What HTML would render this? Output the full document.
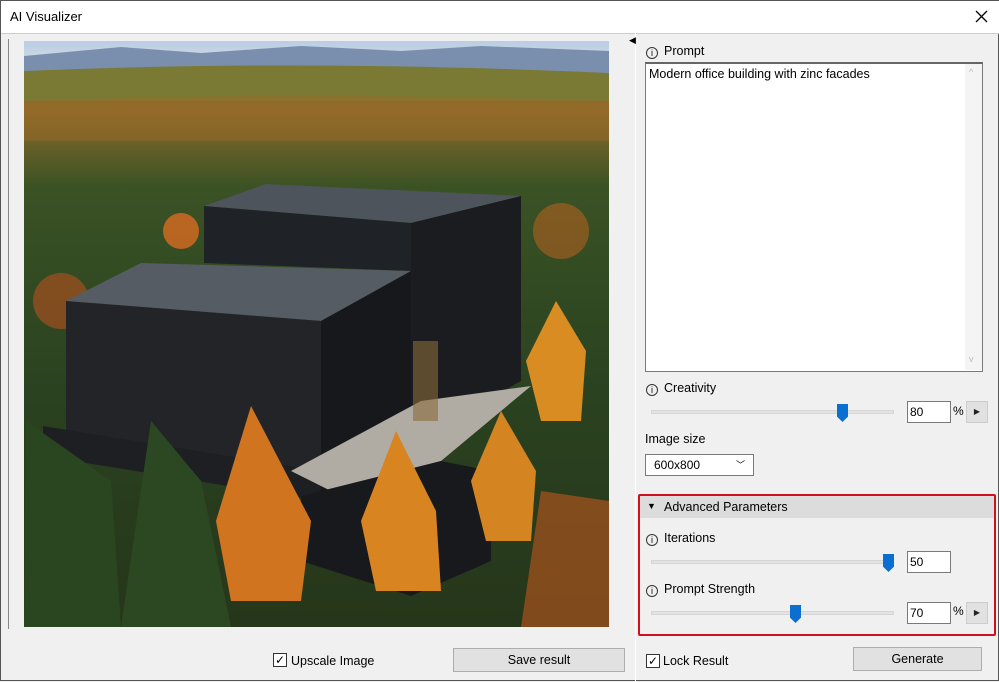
<!DOCTYPE html>
<html><head><style>
*{box-sizing:border-box;margin:0;padding:0}
body{width:999px;height:681px;background:#f0f0f0;font-family:"Liberation Sans",sans-serif;font-size:12px;color:#000;position:relative;overflow:hidden;border:1px solid #555}
.a{position:absolute}
.title{left:0;top:0;width:999px;height:32px;background:#fff}
.info{display:inline-block;width:12px;height:12px;border:1px solid #333;border-radius:50%;font-size:9px;text-align:center;line-height:10px;margin-right:6px;vertical-align:-1px}
.lbl{font-size:12.5px}
.track{height:4px;background:#e2e2e2;border:1px solid #d6d6d6}
.thumb{width:11px;height:18px;background:#0a6fd1;clip-path:polygon(0 0,100% 0,100% 70%,50% 100%,0 70%)}
.inp{background:#fff;border:1px solid #7a7a7a;height:22px;padding:3px 2px;font-size:12px}
.btn{background:#e1e1e1;border:1px solid #adadad;text-align:center;line-height:22px;font-size:12.5px}
.sbtn{width:22px;height:22px;background:#e1e1e1;border:1px solid #ccc;font-size:8px;text-align:center;line-height:20px;color:#222}
.cb{width:14px;height:14px;border:1px solid #333;background:#fff;font-size:12px;line-height:12px;text-align:center}
</style></head><body>
<div class="a title"></div>
<div class="a" style="left:9px;top:8px;font-size:13px">AI Visualizer</div>
<svg class="a" style="left:974px;top:9px" width="13" height="13"><path d="M1 1L12 12M12 1L1 12" stroke="#000" stroke-width="1.3"/></svg>
<div class="a" style="left:0;top:32px;width:999px;height:1px;background:#ccc"></div>
<div class="a" style="left:7px;top:38px;width:620px;height:590px;border-left:1px solid #888;background:#f0f0f0"></div>
<div class="a" style="left:634px;top:32px;width:1px;height:649px;background:#fff"></div>
<div class="a" style="left:628px;top:34px;font-size:9px">◀</div>
<svg class="a" style="left:23px;top:40px" width="585" height="586" viewBox="23 40 585 586">
<defs>
<linearGradient id="sky" x1="0" y1="0" x2="0" y2="1"><stop offset="0" stop-color="#b9cde4"/><stop offset="1" stop-color="#d6dde4"/></linearGradient>
<linearGradient id="for" x1="0" y1="0" x2="0" y2="1"><stop offset="0" stop-color="#6a7432"/><stop offset=".12" stop-color="#8a6a2a"/><stop offset=".25" stop-color="#3a5224"/><stop offset=".6" stop-color="#2a4220"/><stop offset="1" stop-color="#26361a"/></linearGradient>
</defs>
<rect x="23" y="40" width="585" height="586" fill="url(#for)"/>
<rect x="23" y="40" width="585" height="25" fill="url(#sky)"/>
<path d="M23 55 L120 46 L200 52 L300 45 L400 50 L480 45 L608 50 L608 72 L23 72Z" fill="#7a8fae"/>
<path d="M23 70 Q300 58 608 72 L608 100 L23 100Z" fill="#7a7a34"/>
<path d="M23 100 Q300 90 608 100 L608 140 L23 140Z" fill="#a06a28" opacity=".45"/>
<circle cx="60" cy="300" r="28" fill="#b8501e" opacity=".6"/>
<circle cx="180" cy="230" r="18" fill="#d06a22" opacity=".85"/>
<circle cx="560" cy="230" r="28" fill="#b06020" opacity=".6"/>
<path d="M203 205 L265 183 L520 195 L410 222Z" fill="#4e545c"/>
<path d="M203 205 L410 222 L410 270 L203 262Z" fill="#1f2226"/>
<path d="M410 222 L520 195 L520 380 L410 440Z" fill="#1a1c20"/>
<path d="M65 300 L140 262 L410 270 L320 320Z" fill="#565c64"/>
<path d="M65 300 L320 320 L320 470 L65 430Z" fill="#222428"/>
<path d="M320 320 L410 270 L410 450 L320 500Z" fill="#17181b"/>
<path d="M42 425 L320 470 L320 500 L42 455Z" fill="#1d1f23"/>
<path d="M290 470 L420 400 L530 385 L440 460 L330 490Z" fill="#b0aca4"/>
<path d="M300 495 L440 460 L490 470 L490 560 L410 595 L300 560Z" fill="#18191c"/>
<rect x="412" y="340" width="25" height="80" fill="#8a6a3a" opacity=".6"/>
<path d="M250 405 L215 520 L230 600 L300 600 L310 520Z" fill="#d07420"/>
<path d="M395 430 L360 520 L375 590 L440 590 L435 510Z" fill="#d88420"/>
<path d="M500 410 L470 480 L485 540 L530 540 L535 470Z" fill="#d48420"/>
<path d="M555 300 L525 360 L540 420 L580 420 L585 350Z" fill="#d88c22"/>
<path d="M25 420 L23 626 L120 626 L110 480Z" fill="#2a4620"/>
<path d="M150 420 L120 626 L230 626 L200 480Z" fill="#2c4822"/>
<path d="M540 490 L520 626 L608 626 L608 500Z" fill="#a0521e" opacity=".75"/>
</svg>
<div class="a cb" style="left:272px;top:652px">✓</div>
<div class="a lbl" style="left:290px;top:653px">Upscale Image</div>
<div class="a btn" style="left:452px;top:647px;width:172px;height:24px">Save result</div>
<div class="a lbl" style="left:645px;top:43px"><span class="info">i</span>Prompt</div>
<div class="a" style="left:644px;top:61px;width:338px;height:310px;background:#fff;border:1px solid #7a7a7a;border-top:2px solid #666"></div>
<div class="a" style="left:964px;top:63px;width:17px;height:306px;background:#f4f4f4"></div>
<div class="a" style="left:968px;top:66px;font-size:9px;color:#bbb">^</div>
<div class="a" style="left:968px;top:353px;font-size:9px;color:#bbb">v</div>
<div class="a" style="left:648px;top:66px;font-size:12.5px">Modern office building with zinc facades</div>
<div class="a lbl" style="left:645px;top:380px"><span class="info">i</span>Creativity</div>
<div class="a track" style="left:650px;top:409px;width:243px"></div>
<div class="a thumb" style="left:836px;top:403px"></div>
<div class="a inp" style="left:906px;top:400px;width:44px">80</div>
<div class="a" style="left:952px;top:403px;font-size:12px">%</div>
<div class="a sbtn" style="left:965px;top:400px">▶</div>
<div class="a lbl" style="left:644px;top:431px">Image size</div>
<div class="a inp" style="left:644px;top:453px;width:109px;height:22px;padding-left:8px">600x800<span style="position:absolute;right:8px;top:3px;font-size:9px">﹀</span></div>
<div class="a" style="left:637px;top:493px;width:358px;height:142px;border:2px solid #d0101e;border-radius:2px"></div>
<div class="a" style="left:639px;top:495px;width:354px;height:22px;background:#dcdcdc"></div>
<div class="a" style="left:646px;top:500px;font-size:9px">▼</div>
<div class="a lbl" style="left:663px;top:499px">Advanced Parameters</div>
<div class="a lbl" style="left:645px;top:530px"><span class="info">i</span>Iterations</div>
<div class="a track" style="left:650px;top:559px;width:243px"></div>
<div class="a thumb" style="left:882px;top:553px"></div>
<div class="a inp" style="left:906px;top:550px;width:44px">50</div>
<div class="a lbl" style="left:645px;top:581px"><span class="info">i</span>Prompt Strength</div>
<div class="a track" style="left:650px;top:610px;width:243px"></div>
<div class="a thumb" style="left:789px;top:604px"></div>
<div class="a inp" style="left:906px;top:601px;width:44px">70</div>
<div class="a" style="left:952px;top:603px;font-size:12px">%</div>
<div class="a sbtn" style="left:965px;top:601px">▶</div>
<div class="a cb" style="left:645px;top:653px">✓</div>
<div class="a lbl" style="left:662px;top:653px">Lock Result</div>
<div class="a btn" style="left:852px;top:646px;width:129px;height:24px">Generate</div>
</body></html>
